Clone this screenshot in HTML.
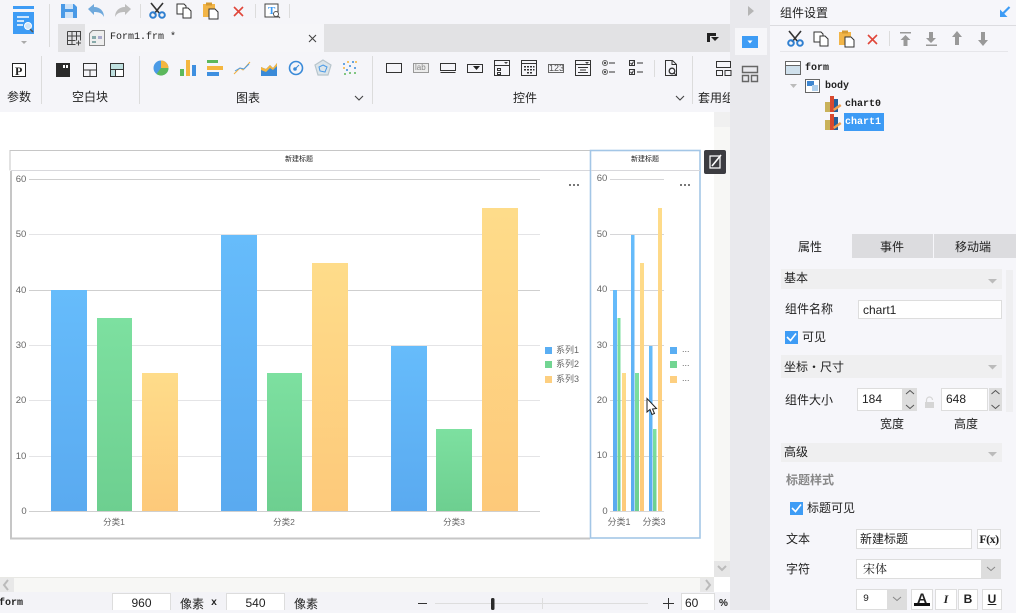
<!DOCTYPE html>
<html><head><meta charset="utf-8">
<style>
html,body{margin:0;padding:0;width:1016px;height:610px;overflow:hidden;background:#f5f5f9;font-family:"Liberation Sans","Noto Sans CJK SC",sans-serif;color:#222}
.b{position:absolute}
.t{position:absolute;white-space:nowrap;line-height:16px;font-size:12px;color:#222}
.m{font-family:"Liberation Mono","Noto Sans CJK SC",monospace;font-size:10px;color:#222}
.c{font-family:"Liberation Sans","Noto Sans CJK SC",sans-serif;font-size:8.5px;color:#666;text-align:center;width:40px}
.y{font-size:9.5px;color:#666;width:16px;text-align:center}
.l{font-size:9px;color:#666}
.s{font-size:12px;background:#fff;border:1px solid #ddd;box-sizing:border-box;position:absolute;line-height:18px;white-space:nowrap;color:#222}
.sec{position:absolute;left:781px;width:221px;background:#efeff0}
svg{position:absolute;left:0;top:0}
</style></head><body>
<!-- regions -->
<div class="b" style="left:58px;top:24px;width:672px;height:28px;background:#e2e2e4"></div>
<div class="b" style="left:85px;top:24px;width:239px;height:28px;background:#f6f6f9"></div>
<div class="b" style="left:0;top:112px;width:714px;height:465px;background:#fff"></div>
<div class="b" style="left:714px;top:112px;width:16px;height:465px;background:#f7f7f5"></div>
<div class="b" style="left:714px;top:112px;width:16px;height:15px;background:#f0f0f0"></div>
<div class="b" style="left:714px;top:561px;width:16px;height:16px;background:#e6e6e6"></div>
<div class="b" style="left:730px;top:0;width:40px;height:610px;background:#e9e9ed"></div>
<div class="b" style="left:735px;top:28px;width:32px;height:27px;background:#f6f6f9"></div>
<div class="b" style="left:770px;top:0;width:246px;height:610px;background:#f6f6fa"></div>
<div class="b" style="left:0;top:577px;width:714px;height:15px;background:#f7f7f5;border-top:1px solid #e8e8e4;box-sizing:border-box"></div>
<div class="b" style="left:0;top:578px;width:14px;height:14px;background:#e8e8e8"></div>
<div class="b" style="left:700px;top:578px;width:14px;height:14px;background:#e8e8e8"></div>
<div class="b" style="left:714px;top:577px;width:16px;height:15px;background:#fff"></div>
<div class="b" style="left:0;top:592px;width:730px;height:18px;background:#f3f3f7"></div>
<!-- right tabs -->
<div class="b" style="left:852px;top:234px;width:81px;height:24px;background:#dcdcdf"></div>
<div class="b" style="left:934px;top:234px;width:82px;height:24px;background:#dcdcdf"></div>
<div class="b" style="left:770px;top:25px;width:246px;height:1px;background:#dcdce0"></div>
<div class="b" style="left:780px;top:51px;width:228px;height:1px;background:#e6e6ea"></div>
<div class="sec" style="top:269px;height:20px"></div>
<div class="sec" style="top:355px;height:23px"></div>
<div class="sec" style="top:443px;height:19px"></div>
<div class="b" style="left:1006px;top:270px;width:7px;height:142px;background:#efeff1"></div>
<div class="b" style="left:844px;top:113px;width:40px;height:18px;background:#3d9bf5"></div>

<svg width="1016" height="610" viewBox="0 0 1016 610">
<defs>
<linearGradient id="gb" x1="0" y1="0" x2="0" y2="1"><stop offset="0" stop-color="#66bcfb"/><stop offset="1" stop-color="#5aaaf0"/></linearGradient>
<linearGradient id="gg" x1="0" y1="0" x2="0" y2="1"><stop offset="0" stop-color="#7de0a0"/><stop offset="1" stop-color="#6dcf90"/></linearGradient>
<linearGradient id="gy" x1="0" y1="0" x2="0" y2="1"><stop offset="0" stop-color="#fedc8a"/><stop offset="1" stop-color="#fdc97a"/></linearGradient>
</defs>
<!-- separators -->
<g stroke="#dcdcdc" stroke-width="1">
<path d="M49.5 4V47M140.5 4V18M255.5 4V18M289.5 4V18M41.5 56V104M139.5 56V104M372.5 56V104M692.5 56V104M654.5 60V77M889.5 31V46"/>
</g>
<!-- logo -->
<path d="M13 6h21v3H13z" fill="#3e9cf5"/>
<path d="M13 12h21v22H13z" fill="#3e9cf5"/>
<path d="M17 17h12M17 21h7M17 25h6" stroke="#fff" stroke-width="1.5"/>
<circle cx="28" cy="26" r="3.5" fill="#cfe4f7" stroke="#fff"/><path d="M30 29l3 3" stroke="#555" stroke-width="1.5"/>
<path d="M21 41h6l-3 3z" fill="#aaa"/>
<!-- save undo redo -->
<path d="M61 4h13l3 3v11H61z" fill="#4a9ae6"/><path d="M65 4h8v5h-8zM65 12h8v6h-8z" fill="#cfe3f7"/>
<path d="M88 9l6-5v3c6 0 10 4 10 10-2-4-5-5-10-5v3z" fill="#6fa9dc"/>
<path d="M131 9l-6-5v3c-6 0-10 4-10 10 2-4 5-5 10-5v3z" fill="#bcbcbc"/>
<!-- cut copy paste del top -->
<g>
<path d="M151 3l9 11M163 3l-9 11" stroke="#333" stroke-width="1.6" fill="none"/><circle cx="153" cy="15" r="2.8" fill="none" stroke="#2f7fd0" stroke-width="2"/><circle cx="162" cy="15" r="2.8" fill="none" stroke="#2f7fd0" stroke-width="2"/>
<path d="M177 4h7l2 2v8h-9z" fill="#fff" stroke="#333"/><path d="M183 8h5l3 3v7h-8z" fill="#fff" stroke="#333"/>
<path d="M203 4h12v13h-12z" fill="#f2b548"/><path d="M206 2.500h6v3h-6z" fill="#d59a32"/><path d="M209 9h6l3 3v7h-9z" fill="#fff" stroke="#333"/>
<path d="M234 7l9 9M243 7l-9 9" stroke="#e0463a" stroke-width="1.6"/>
</g>
<path d="M265 4h13v13h-13z" fill="#fff" stroke="#444"/><text x="268" y="14" font-family="Liberation Serif" font-size="11" font-weight="bold" fill="#3e9cf5">T</text><circle cx="276" cy="14" r="2.500" fill="#fff" stroke="#555"/><path d="M278 16l2 2" stroke="#555"/>
<!-- tab icons -->
<path d="M67.500 31.500h13v9M67.500 31.500v13h8M72 31.500v13M76.500 31.500v9M67.500 36h13M67.500 40.500h8M76 43h5M78.500 40.500v5" fill="none" stroke="#444"/>
<path d="M89.500 33.500l3-3h12v15h-15z" fill="#eee" stroke="#888"/><path d="M92 36h4v3h-4zM92 41h4v2h-4z" fill="#8aa"/><path d="M98 36h4v3h-4z" fill="#aac"/>
<path d="M309 35l7 7M316 35l-7 7" stroke="#444" stroke-width="1.100"/>
<path d="M707 33h9v3h-6v6h-3z" fill="#222"/><path d="M711 37h8l-4 4z" fill="#222"/>
<!-- ribbon left -->
<path d="M12.500 63.500h13v13h-13z" fill="#fff" stroke="#222"/><text x="15" y="75" font-family="Liberation Serif" font-size="12" font-weight="bold" fill="#222">P</text>
<path d="M56 63h14v14H56z" fill="#2a2a2a"/><path d="M63 65h2v3h-2zM66 65h2v3h-2z" fill="#fff"/>
<path d="M83.500 63.500h13v13h-13zM83.500 70h13M90 70v6.500" fill="none" stroke="#333"/>
<path d="M110.500 63.500h13v13h-13z" fill="#fff" stroke="#333"/><path d="M111 64h12v5h-12zM111 70h4v6h-4z" fill="#bfe0e0"/><path d="M110.500 69.500h13M115.500 69.500v7" stroke="#333"/>
<!-- chart icons -->
<circle cx="161" cy="68" r="7.500" fill="#4a9ae6"/><path d="M161 68V60.500a7.500 7.500 0 0 1 7.500 7.500z" fill="#f4b63f"/><path d="M161 68h7.500a7.500 7.500 0 0 1-12 6z" fill="#5cb85c"/>
<path d="M180 69h4v7h-4z" fill="#5cb85c"/><path d="M186 60h4v16h-4z" fill="#f4b63f"/><path d="M192 65h4v11h-4z" fill="#3e8fe0"/>
<path d="M207 60h11v3h-11z" fill="#5cb85c"/><path d="M207 66h16v4h-16z" fill="#f4b63f"/><path d="M207 72h12v4h-12z" fill="#3e8fe0"/>
<path d="M234 74l6-6 3 2 7-8" fill="none" stroke="#f0b040"/><path d="M235 71l5-3 4 1 5-5" fill="none" stroke="#4a9ae6"/>
<path d="M261 67l5 2 4-4 3 3 4-5v13h-16z" fill="#3a8ad8"/><path d="M261 67l5 2 4-4 3 3 4-5v3l-4 4-3-2-4 4-5-2z" fill="#f4b63f"/>
<circle cx="296" cy="68" r="6.500" fill="none" stroke="#3a8ad8" stroke-width="1.600"/><circle cx="295" cy="69" r="1.800" fill="#3a8ad8"/><path d="M295 69l4-4" stroke="#3a8ad8"/>
<path d="M323 60l8 5-3 10h-10l-3-10z" fill="#dce5ea" stroke="#b8c5cc" stroke-width="1.200"/><path d="M323 65l4 2-2 5-5-1-1-4z" fill="none" stroke="#4a9ae6"/>
<g fill="#3a8ad8"><circle cx="344" cy="64" r="1"/><circle cx="350" cy="66" r="1"/><circle cx="355" cy="68" r="1"/><circle cx="347" cy="70" r="1"/><circle cx="353" cy="62" r="1"/></g><g fill="#f4b63f"><circle cx="348" cy="62" r="1"/><circle cx="356" cy="62" r="1"/><circle cx="344" cy="68" r="1"/></g><g fill="#5cb85c"><circle cx="350" cy="73" r="1"/><circle cx="345" cy="74" r="1"/><circle cx="355" cy="73" r="1"/></g>
<!-- widget icons -->
<g fill="none" stroke="#333">
<path d="M386.500 63.500h15v9h-15z"/>
<path d="M413.500 63.500h15v9h-15z" stroke="#999" fill="#ececec"/>
<path d="M440.500 63.500h15v7h-15zM440.500 72.500h15"/>
<path d="M467.500 64.500h15v8h-15z"/>
<path d="M494.500 60.500h15v15h-15zM494.500 65.500h15M497.500 68.500h3v2h-3zM497.500 72.500h3v2h-3z"/>
<path d="M521.500 60.500h15v15h-15zM521.500 63.500h15"/>
<path d="M548.500 64.500h15v8h-15z" stroke="#666"/>
<path d="M575.500 60.500h15v15h-15zM575.500 64.500h15M578 67.500h10M580 70h6M578 72.500h10"/>
<circle cx="605" cy="63" r="2.500" stroke="#666"/><circle cx="605" cy="72" r="2.500" stroke="#666"/><path d="M609 63h6M609 72h6"/>
<path d="M629.500 60.500h5v5h-5zM629.500 69.500h5v5h-5zM637 63h6M637 72h6M630.500 63l1.500 1.500 1.500-3M630.500 72l1.500 1.500 1.500-3"/>
<path d="M665.500 60.500h7l4 4v11h-11zM672 60.500v4h4"/><circle cx="672" cy="71" r="2.800" stroke-width="1.300"/><path d="M674 73l2.500 2.500"/>
<path d="M716.500 61.500h14v6h-14zM716.500 70.500h6v5h-6zM725 70.500h6v5h-6z"/>
</g>
<circle cx="605" cy="63" r="1.200" fill="#555"/><circle cx="605" cy="72" r="1.200" fill="#555"/>
<path d="M473 66h7l-3.500 4z" fill="#222"/><path d="M504 62h4l-2 2z" fill="#444"/><path d="M585 62h4l-2 2z" fill="#444"/>
<g fill="#333"><path d="M524 66h2v1.500h-2zM527 66h2v1.500h-2zM530 66h2v1.500h-2zM533 66h1.500v1.500H533zM524 69h2v1.500h-2zM527 69h2v1.500h-2zM530 69h2v1.500h-2zM533 69h1.500v1.500H533zM527 72h2v1.500h-2zM530 72h2v1.500h-2z"/></g>
<!-- chevrons -->
<path d="M355 96l4 4 4-4M676 96l4 4 4-4" fill="none" stroke="#444" stroke-width="1.100"/>
<!-- right strip -->
<path d="M748 6l6 5-6 5z" fill="#b5b5b5"/>
<path d="M742 36h16v12h-16z" fill="#3e9cf5"/><path d="M747.500 40.500h5l-2.500 3z" fill="#fff"/>
<path d="M742.500 66.500h15v6h-15zM742.500 75.500h6v6h-6zM751.500 75.500h6v6h-6z" fill="none" stroke="#666" stroke-width="1.400"/>

<!-- chart frame -->
<path d="M10 170.500V150.500H590" fill="none" stroke="#c6c6c6" stroke-width="1"/>
<path d="M11 171V539" fill="none" stroke="#c6c6c6" stroke-width="2"/>
<path d="M10 538.500h580" stroke="#c6c6c6" stroke-width="2"/>
<path d="M11 170.500h579" stroke="#d8d8dc"/>
<g stroke="#e4e4e6"><path d="M29 234.500h511M29 345.500h511M29 400.500h511M29 456.500h511"/></g>
<g stroke="#cfcfcf"><path d="M29 179.500h511M29 290.500h511M29 511.500h511"/></g>
<!-- left chart bars -->
<rect x="51" y="290" width="36" height="221" fill="url(#gb)"/>
<rect x="97" y="318" width="35" height="193" fill="url(#gg)"/>
<rect x="142" y="373" width="36" height="138" fill="url(#gy)"/>
<rect x="221" y="235" width="36" height="276" fill="url(#gb)"/>
<rect x="267" y="373" width="35" height="138" fill="url(#gg)"/>
<rect x="312" y="263" width="36" height="248" fill="url(#gy)"/>
<rect x="391" y="346" width="36" height="165" fill="url(#gb)"/>
<rect x="436" y="429" width="36" height="82" fill="url(#gg)"/>
<rect x="482" y="208" width="36" height="303" fill="url(#gy)"/>
<path d="M569 184h2v2h-2zM573 184h2v2h-2zM577 184h2v2h-2zM680 184h2v2h-2zM684 184h2v2h-2zM688 184h2v2h-2z" fill="#777"/>
<!-- legend -->
<rect x="545" y="347" width="7" height="7" fill="#5aaef3"/><rect x="545" y="361" width="7" height="7" fill="#72d592"/><rect x="545" y="376" width="7" height="7" fill="#fdcf80"/>
<rect x="670" y="347" width="7" height="7" fill="#5aaef3"/><rect x="670" y="361" width="7" height="7" fill="#72d592"/><rect x="670" y="376" width="7" height="7" fill="#fdcf80"/>
<!-- right chart -->
<rect x="590.500" y="150.500" width="109.500" height="387.500" fill="none" stroke="#a3c6e6" stroke-width="1.600"/>
<path d="M591 170.500h109" stroke="#d8d8dc"/>
<g stroke="#d6d6d8"><path d="M610 179.500h54M610 234.500h54M610 290.500h54M610 345.500h54M610 400.500h54M610 456.500h54M610 511.500h54"/></g>
<rect x="613" y="290" width="4" height="221" fill="url(#gb)"/><rect x="617.500" y="318" width="3" height="193" fill="url(#gg)"/><rect x="622" y="373" width="4" height="138" fill="url(#gy)"/>
<rect x="631" y="235" width="3.500" height="276" fill="url(#gb)"/><rect x="635" y="373" width="4" height="138" fill="url(#gg)"/><rect x="640" y="263" width="4" height="248" fill="url(#gy)"/>
<rect x="649" y="346" width="3.500" height="165" fill="url(#gb)"/><rect x="653" y="429" width="3.500" height="82" fill="url(#gg)"/><rect x="658" y="208" width="4" height="303" fill="url(#gy)"/>
<!-- edit button -->
<rect x="704" y="150" width="22" height="24" rx="2" fill="#3c3c40"/>
<path d="M710 156h10v12h-10z" fill="none" stroke="#fff" stroke-width="1.200"/><path d="M712 166l9-11" stroke="#fff" stroke-width="1.600"/>
<!-- scroll arrows -->
<path d="M8 580l-4 5 4 5" fill="none" stroke="#bbb" stroke-width="2"/><path d="M706 580l4 5-4 5" fill="none" stroke="#bbb" stroke-width="2"/><path d="M718 566l4 4 4-4" fill="none" stroke="#bbb" stroke-width="2"/>
<!-- cursor -->
<path d="M647 398.500v13.500l3-2.500 2 5 2.500-1-2-4.500 4-.5z" fill="#fff" stroke="#222"/>
<!-- right panel icons -->
<path d="M789 31l9 11M801 31l-9 11" stroke="#333" stroke-width="1.600" fill="none"/><circle cx="791" cy="43" r="2.800" fill="none" stroke="#2f7fd0" stroke-width="2"/><circle cx="800" cy="43" r="2.800" fill="none" stroke="#2f7fd0" stroke-width="2"/>
<path d="M814 32h7l2 2v8h-9z" fill="#fff" stroke="#333"/><path d="M820 36h5l3 3v7h-8z" fill="#fff" stroke="#333"/>
<path d="M839 32h12v13h-12z" fill="#f2b548"/><path d="M842 30.500h6v3h-6z" fill="#d59a32"/><path d="M845 37h6l3 3v7h-9z" fill="#fff" stroke="#333"/>
<path d="M868 35l9 9M877 35l-9 9" stroke="#e0463a" stroke-width="1.600"/>
<g fill="#999"><path d="M900 32h11v1.500h-11zM905.500 35l5 5h-3v6h-4v-6h-3z"/><path d="M931 43l-5-5h3v-6h4v6h3zM926 44.500h11v1.500h-11z"/><path d="M957 31l5 6h-3v8h-4v-8h-3z"/><path d="M983 46l-5-6h3v-8h4v8h3z"/></g>
<path d="M1009.500 7l-6.500 6.500" stroke="#3e9cf5" stroke-width="2.200"/><path d="M1000 17v-7.500l7.500 7.500z" fill="#3e9cf5"/>
<!-- tree -->
<path d="M785.500 61.500h15v13h-15z" fill="#cfe0ec" stroke="#666"/><path d="M786 62h14v3h-14z" fill="#fff"/><path d="M786 65.500h14" stroke="#666"/>
<path d="M790 84h7l-3.500 4z" fill="#bbb"/>
<path d="M805.500 79.500h14v13h-14z" fill="#fff" stroke="#666"/><path d="M807 81h7v5h-7z" fill="#3e86d0"/><path d="M812 85h6v6h-6z" fill="#b0d0ec"/>
<g><path d="M825 102h5v10h-5z" fill="#c9b25a"/><path d="M830 96h4v16h-4z" fill="#d8492f"/><path d="M834 99h4v13h-4z" fill="#255f99"/><path d="M833 109l7-5 1.500 2-7 5z" fill="#f0a050"/></g>
<g transform="translate(0 18)"><path d="M825 102h5v10h-5z" fill="#c9b25a"/><path d="M830 96h4v16h-4z" fill="#d8492f"/><path d="M834 99h4v13h-4z" fill="#255f99"/><path d="M833 109l7-5 1.500 2-7 5z" fill="#f0a050"/></g>
<!-- panel triangles -->
<path d="M988 279h9l-4.500 4.500zM988 365h9l-4.500 4.500zM988 452h9l-4.500 4.500z" fill="#bbb"/>
<!-- checkbox -->
<rect x="785" y="331" width="13" height="13" fill="#3e9cf5"/><path d="M787 337l3.500 3.500 5.500-7" fill="none" stroke="#fff" stroke-width="1.600"/>
<rect x="790" y="502" width="13" height="13" fill="#3e9cf5"/><path d="M792 508l3.500 3.500 5.500-7" fill="none" stroke="#fff" stroke-width="1.600"/>
<!-- lock -->
<path d="M925 402h9v6h-9z" fill="#d5d5d5"/><path d="M926.500 402v-2a3 3 0 0 1 6 0" fill="none" stroke="#d5d5d5" stroke-width="1.200"/>
<!-- status bar -->
<path d="M435 603.500h213" stroke="#ddd"/><path d="M418 603.500h9" stroke="#333"/>
<rect x="491" y="598" width="3.500" height="12" rx="1.500" fill="#2a2a2a"/><path d="M542.500 598v11" stroke="#ddd"/>
<path d="M663 603.500h11M668.500 598v11" stroke="#333"/>
</svg>

<!-- ribbon text -->
<div class="t" style="left:7px;top:89px;font-size:12px">参数</div>
<div class="t" style="left:72px;top:89px;font-size:12px">空白块</div>
<div class="t" style="left:236px;top:90px;font-size:12px">图表</div>
<div class="t" style="left:513px;top:90px;font-size:12px">控件</div>
<div class="t" style="left:698px;top:90px;font-size:12px;width:32px;overflow:hidden">套用组件</div>
<div class="t m" style="left:110px;top:30px">Form1.frm *</div>
<div class="t" style="left:415px;top:60px;font-size:8px;color:#888">lab</div>
<div class="t" style="left:549px;top:60px;font-size:9px;color:#555">123</div>
<!-- chart texts -->
<div class="t" style="left:285px;top:152px;font-size:7px;color:#222">新建标题</div>
<div class="t" style="left:631px;top:152px;font-size:7px;color:#222">新建标题</div>
<div class="t y" style="left:13px;top:172px">60</div>
<div class="t y" style="left:13px;top:227px">50</div>
<div class="t y" style="left:13px;top:283px">40</div>
<div class="t y" style="left:13px;top:338px">30</div>
<div class="t y" style="left:13px;top:393px">20</div>
<div class="t y" style="left:13px;top:449px">10</div>
<div class="t y" style="left:16px;top:504px">0</div>
<div class="t y" style="left:594px;top:171px">60</div>
<div class="t y" style="left:594px;top:227px">50</div>
<div class="t y" style="left:594px;top:282px">40</div>
<div class="t y" style="left:594px;top:338px">30</div>
<div class="t y" style="left:594px;top:393px">20</div>
<div class="t y" style="left:594px;top:448px">10</div>
<div class="t y" style="left:597px;top:504px">0</div>
<div class="t c" style="left:94px;top:514px">分类1</div>
<div class="t c" style="left:264px;top:514px">分类2</div>
<div class="t c" style="left:434px;top:514px">分类3</div>
<div class="t c" style="left:599px;top:514px;font-size:9px">分类1</div>
<div class="t c" style="left:634px;top:514px;font-size:9px">分类3</div>
<div class="t l" style="left:556px;top:342px">系列1</div>
<div class="t l" style="left:556px;top:356px">系列2</div>
<div class="t l" style="left:556px;top:371px">系列3</div>
<div class="t l" style="left:682px;top:341px">...</div>
<div class="t l" style="left:682px;top:355px">...</div>
<div class="t l" style="left:682px;top:370px">...</div>
<!-- panel text -->
<div class="t" style="left:780px;top:5px;font-size:12px">组件设置</div>
<div class="t m" style="left:805px;top:61px;font-weight:bold">form</div>
<div class="t m" style="left:825px;top:79px;font-weight:bold">body</div>
<div class="t m" style="left:845px;top:97px;font-weight:bold">chart0</div>
<div class="t m" style="left:845px;top:115px;color:#fff;font-weight:bold">chart1</div>
<div class="t" style="left:798px;top:239px">属性</div>
<div class="t" style="left:880px;top:239px">事件</div>
<div class="t" style="left:955px;top:239px">移动端</div>
<div class="t" style="left:784px;top:270px">基本</div>
<div class="t" style="left:785px;top:301px">组件名称</div>
<div class="s" style="left:858px;top:300px;width:144px;height:19px;padding-left:4px">chart1</div>
<div class="t" style="left:802px;top:329px">可见</div>
<div class="t" style="left:784px;top:359px">坐标・尺寸</div>
<div class="t" style="left:785px;top:392px">组件大小</div>
<div class="s" style="left:857px;top:388px;width:46px;height:23px;line-height:21px;padding-left:4px">184</div>
<div class="s" style="left:941px;top:388px;width:47px;height:23px;line-height:21px;padding-left:4px">648</div>
<div class="b" style="left:903px;top:388px;width:14px;height:23px;background:#ddd"></div>
<div class="b" style="left:989px;top:388px;width:13px;height:23px;background:#ddd"></div>
<div class="t" style="left:880px;top:416px">宽度</div>
<div class="t" style="left:954px;top:416px">高度</div>
<div class="t" style="left:784px;top:444px">高级</div>
<div class="t" style="left:786px;top:472px;font-weight:bold;color:#888">标题样式</div>
<div class="t" style="left:807px;top:500px">标题可见</div>
<div class="t" style="left:786px;top:531px">文本</div>
<div class="s" style="left:856px;top:529px;width:116px;height:20px;padding-left:3px">新建标题</div>
<div class="s" style="left:977px;top:529px;width:24px;height:20px;text-align:center;font-family:'Liberation Serif';font-weight:bold;font-size:12px;letter-spacing:-.5px">F(x)</div>
<div class="t" style="left:786px;top:561px">字符</div>
<div class="s" style="left:856px;top:559px;width:145px;height:20px;padding-left:6px;font-family:'Liberation Serif','Noto Serif CJK SC',serif">宋体</div>
<div class="b" style="left:981px;top:559px;width:20px;height:20px;background:#ddd"></div>
<div class="s" style="left:856px;top:589px;width:51px;height:21px;padding-left:6px;font-size:10px;line-height:20px;font-family:'Liberation Mono'">9</div>
<div class="b" style="left:887px;top:589px;width:20px;height:21px;background:#ddd"></div>
<div class="s" style="left:911px;top:589px;width:22px;height:21px;text-align:center;font-weight:bold;line-height:16px;font-size:14px">A<div style="position:absolute;left:2px;right:2px;bottom:3px;height:3px;background:#111"></div></div>
<div class="s" style="left:935px;top:589px;width:22px;height:21px;text-align:center;font-style:italic;font-weight:bold;font-family:'Liberation Serif'">I</div>
<div class="s" style="left:958px;top:589px;width:20px;height:21px;text-align:center;font-weight:bold">B</div>
<div class="s" style="left:982px;top:589px;width:20px;height:21px;text-align:center;font-weight:bold;text-decoration:underline">U</div>
<!-- status -->
<div class="t m" style="left:-1px;top:596px;font-weight:bold">form</div>
<div class="s" style="left:112px;top:593px;width:59px;height:17px;text-align:center;line-height:19px;border-bottom:0">960</div>
<div class="t" style="left:180px;top:596px">像素</div>
<div class="t m" style="left:211px;top:596px;font-weight:bold">x</div>
<div class="s" style="left:226px;top:593px;width:59px;height:17px;text-align:center;line-height:19px;border-bottom:0">540</div>
<div class="t" style="left:294px;top:596px">像素</div>
<div class="s" style="left:681px;top:593px;width:34px;height:17px;padding-left:3px;line-height:19px;border-bottom:0">60</div>
<div class="t" style="left:719px;top:596px;font-size:10px;font-weight:bold">%</div>
<svg width="1016" height="610" viewBox="0 0 1016 610" style="pointer-events:none"><path d="M906 394l4-3.500 4 3.500M906 405l4 3.500 4-3.500M991.500 394l4-3.500 4 3.500M991.500 405l4 3.500 4-3.500" fill="none" stroke="#555"/><path d="M987 567l4 3.500 4-3.500M893 597l4 3.500 4-3.500" fill="none" stroke="#888"/></svg>
</body></html>
